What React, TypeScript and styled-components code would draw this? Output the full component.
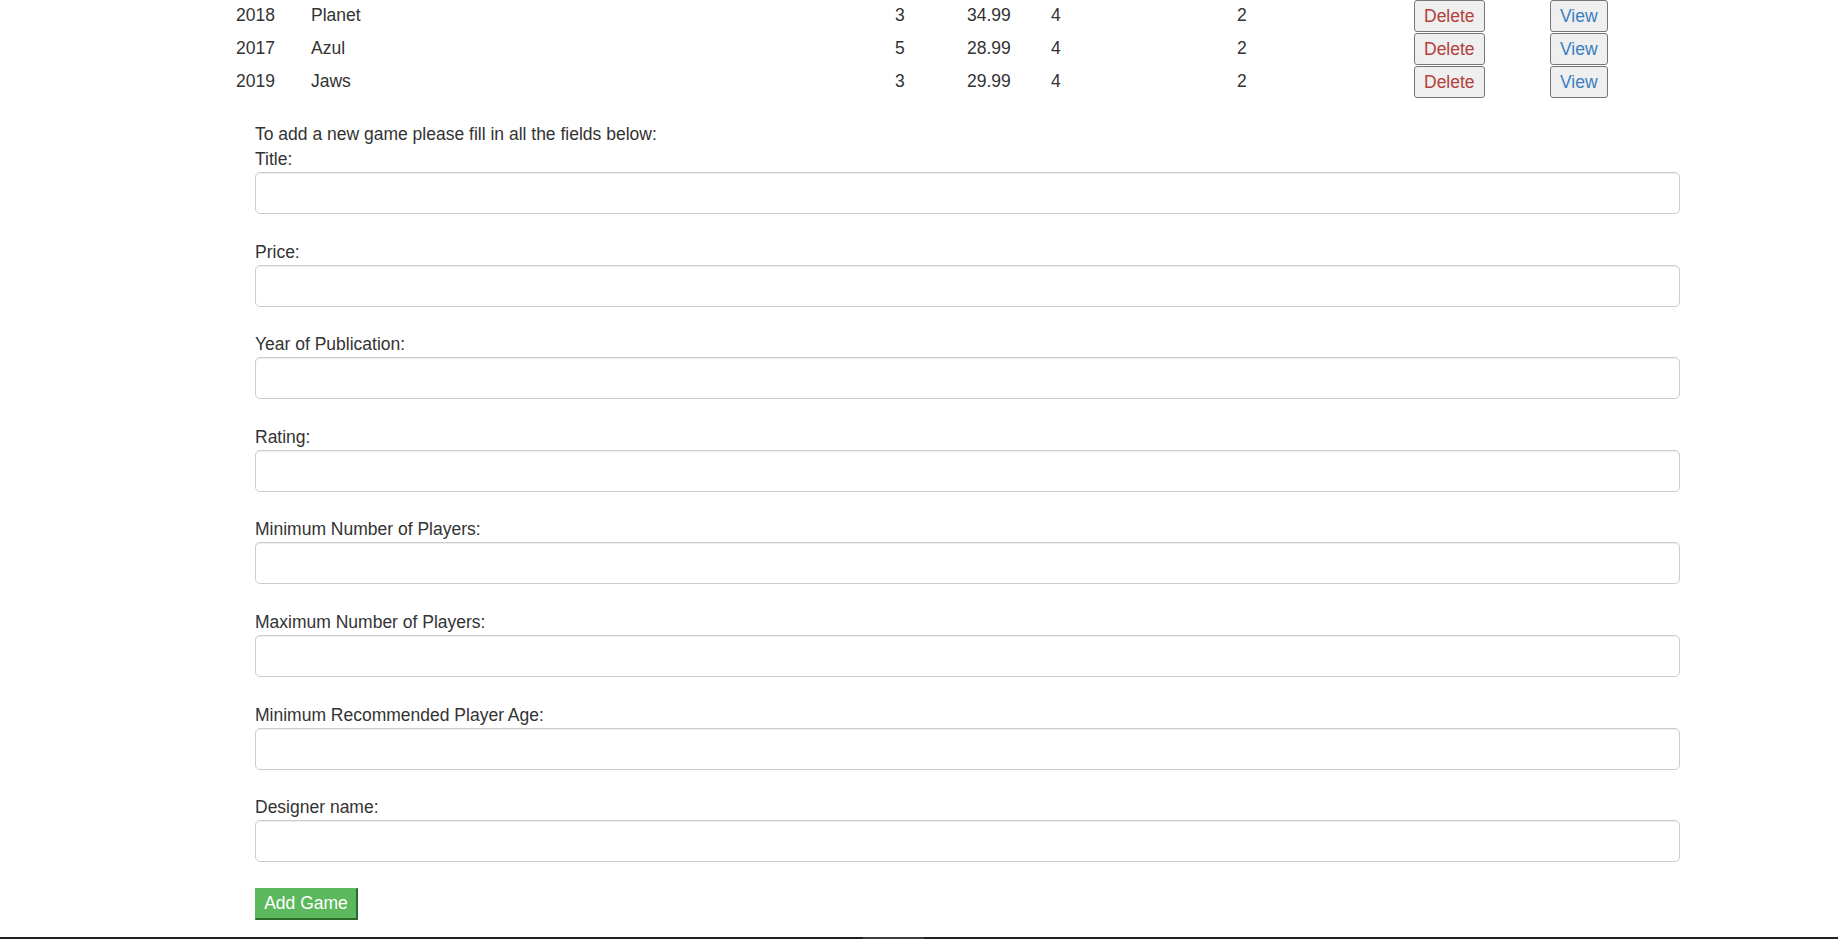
import React from "react";
import styled, { createGlobalStyle } from "styled-components";

const Global = createGlobalStyle`
  html, body { margin: 0; padding: 0; background: #fff; }
  body { font-family: "Liberation Sans", Arial, sans-serif; font-size: 17.5px; color: #333; }
  * { box-sizing: border-box; }
`;

const Page = styled.div`
  height: 939px;
  display: flex;
  flex-direction: column;
  overflow: hidden;
`;

const Content = styled.div`
  flex: 1;
  display: flex;
  flex-direction: column;
`;

const Table = styled.div`
  display: flex;
  flex-direction: column;
`;

const Row = styled.div`
  display: grid;
  grid-template-columns: 236px 75px 584px 72px 84px 186px 177px 136px 100px;
  height: 33px;
  align-items: center;
`;

const Cell = styled.span`
  line-height: 25px;
  padding-bottom: 3px;
  white-space: nowrap;
`;

const Spacer = styled.span``;

const ActionButton = styled.button<{ $tone: "danger" | "info" }>`
  justify-self: start;
  align-self: start;
  height: 32px;
  padding: 0 9px;
  font-family: "Liberation Sans", Arial, sans-serif;
  font-size: 17.5px;
  background: #efefef;
  border: 1px solid #767676;
  border-radius: 3px;
  color: ${(p) => (p.$tone === "danger" ? "#b2403c" : "#3a7fc1")};
  cursor: pointer;
`;

const Form = styled.form`
  margin: 23px 0 0 255px;
  width: 1425px;
  display: flex;
  flex-direction: column;
`;

const Intro = styled.div`
  line-height: 25px;
`;

const Field = styled.div`
  display: flex;
  flex-direction: column;
  margin-bottom: 25.6px;
`;

const Label = styled.label`
  line-height: 25px;
`;

const Input = styled.input`
  height: 42px;
  width: 100%;
  border: 1px solid #ccc;
  border-radius: 5px;
  box-shadow: inset 0 1px 1px rgba(0, 0, 0, 0.075);
  font-family: "Liberation Sans", Arial, sans-serif;
  font-size: 17.5px;
  padding: 0 15px;
  outline: none;
`;

const AddButton = styled.button`
  align-self: flex-start;
  width: 103px;
  height: 32px;
  background: #5cb85c;
  color: #fff;
  font-family: "Liberation Sans", Arial, sans-serif;
  font-size: 17.5px;
  border-style: solid;
  border-width: 1px 2px 2px 1px;
  border-color: #5cb85c #2c6a2c #2c6a2c #5cb85c;
  padding: 0;
  cursor: pointer;
`;

const BottomBar = styled.div`
  height: 2px;
  background: #1f1f1f;
  display: flex;
`;

const BarThumb = styled.div`
  margin-left: 863px;
  width: 61px;
  background: #3d3d3d;
`;

const games = [
  { year: "2018", title: "Planet", rating: "3", price: "34.99", max: "4", min: "2" },
  { year: "2017", title: "Azul", rating: "5", price: "28.99", max: "4", min: "2" },
  { year: "2019", title: "Jaws", rating: "3", price: "29.99", max: "4", min: "2" },
];

const fields = [
  "Title:",
  "Price:",
  "Year of Publication:",
  "Rating:",
  "Minimum Number of Players:",
  "Maximum Number of Players:",
  "Minimum Recommended Player Age:",
  "Designer name:",
];

export default function App() {
  return (
    <>
      <Global />
      <Page>
        <Content>
          <Table>
            {games.map((g) => (
              <Row key={g.title}>
                <Spacer />
                <Cell>{g.year}</Cell>
                <Cell>{g.title}</Cell>
                <Cell>{g.rating}</Cell>
                <Cell>{g.price}</Cell>
                <Cell>{g.max}</Cell>
                <Cell>{g.min}</Cell>
                <ActionButton $tone="danger">Delete</ActionButton>
                <ActionButton $tone="info">View</ActionButton>
              </Row>
            ))}
          </Table>
          <Form onSubmit={(e) => e.preventDefault()}>
            <Intro>To add a new game please fill in all the fields below:</Intro>
            {fields.map((f) => (
              <Field key={f}>
                <Label>{f}</Label>
                <Input type="text" />
              </Field>
            ))}
            <AddButton type="submit">Add Game</AddButton>
          </Form>
        </Content>
        <BottomBar>
          <BarThumb />
        </BottomBar>
      </Page>
    </>
  );
}
